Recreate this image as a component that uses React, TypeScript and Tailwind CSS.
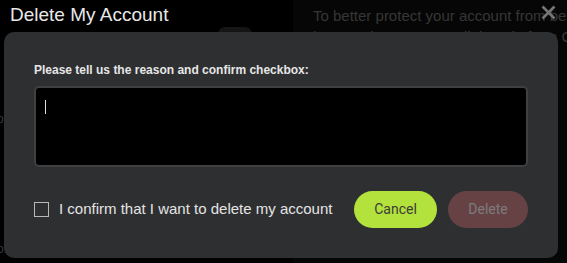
import React from "react";

export default function App() {
  return (
    <div
      className="relative w-[567px] h-[263px] overflow-hidden bg-black"
      style={{ fontFamily: '"Liberation Sans", Arial, sans-serif' }}
    >
      {/* dimmed page behind the modal */}
      <div className="absolute inset-0 pointer-events-none">
        <div className="absolute left-[293px] top-0 w-[274px] h-[263px] bg-[#060606]" />
        <div className="absolute left-[218px] top-[27px] w-[34px] h-[14px] rounded-full bg-[#151515]" />
        <div className="absolute left-[313px] top-[5px] w-[254px] overflow-hidden text-[15px] leading-[21px] text-[#363636] whitespace-nowrap">
          <div>To better protect your account from being h</div>
          <div>just need to enter a 6-digit code from Goog</div>
        </div>
        <div className="absolute left-0 top-[110px] w-[4px] overflow-hidden text-[12px] text-[#3a3a3a]">
          <span className="ml-[-3px]">o</span>
        </div>
        <div className="absolute left-0 top-[240px] w-[4px] overflow-hidden text-[12px] text-[#3a3a3a]">
          <span className="ml-[-3px]">o</span>
        </div>
      </div>

      {/* modal */}
      <div className="relative flex flex-col">
        <div className="flex items-start justify-between h-[32px] pl-[10px] pr-[11px]">
          <h1 className="text-[19px] leading-[20px] mt-[5px] text-[#e8e8e8]">Delete My Account</h1>
          <svg width="15" height="15" viewBox="0 0 15 15" className="mt-[5px]">
            <path d="M1.5 1.5 L13.5 13.5 M13.5 1.5 L1.5 13.5" stroke="#757575" strokeWidth="2.6" strokeLinecap="butt" />
          </svg>
        </div>
        <div className="ml-[4px] w-[554px] h-[226px] rounded-[10px] bg-[#2e2f31] px-[30px] pt-[30px] flex flex-col">
          <label className="text-[12px] leading-[16px] font-bold text-[#e6e6e6]">
            Please tell us the reason and confirm checkbox:
          </label>
          <div className="mt-[8px] h-[81px] rounded-[5px] border-2 border-[#3f4042] bg-black relative">
            <div className="absolute left-[9px] top-[12px] w-[1px] h-[14px] bg-[#e0e0e0]" />
          </div>
          <div className="mt-[24px] flex items-center">
            <div className="w-[15px] h-[15px] border-[1.5px] border-[#b8b8b8]" />
            <span className="ml-[10px] text-[15px] text-[#e4e4e4]">
              I confirm that I want to delete my account
            </span>
            <div className="ml-auto flex gap-[11px]" style={{ fontFamily: "Roboto, sans-serif" }}>
              <button className="w-[83px] h-[37px] rounded-full bg-[#b3e23c] text-[14px] text-[#3b3b3b]">
                Cancel
              </button>
              <button className="w-[80px] h-[37px] rounded-full bg-[#674245] text-[14px] text-[#7c7c7c]">
                Delete
              </button>
            </div>
          </div>
        </div>
      </div>
    </div>
  );
}
